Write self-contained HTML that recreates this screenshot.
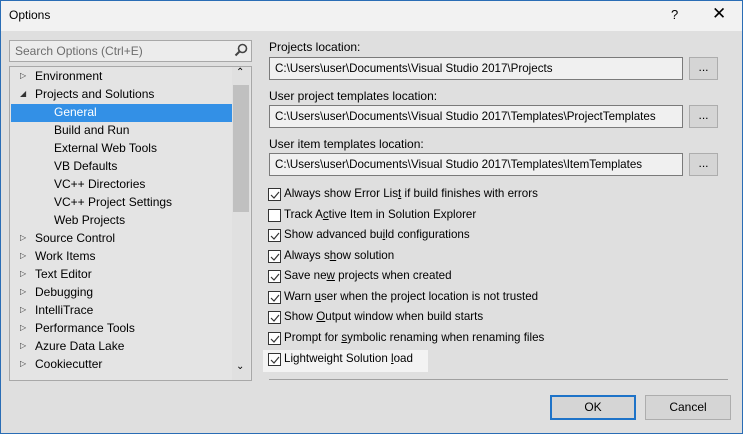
<!DOCTYPE html><html><head><style>
body{margin:0;width:743px;height:434px;overflow:hidden;font-family:"Segoe UI","Liberation Sans",sans-serif;font-size:12px;color:#000}
.win{position:absolute;left:0;top:0;width:741px;height:432px;border:1px solid #2a6db5;background:#dfdfdf}
.title{position:absolute;left:0;top:0;width:741px;height:30px;background:#f2f2f2}
.a{position:absolute;white-space:nowrap}
.box{position:absolute;background:#ececec;border:1px solid #a8a8a8;box-sizing:border-box}
.tb{position:absolute;background:#f0f0f0;border:1px solid #7a7a7a;box-sizing:border-box;height:23px;padding:3px 5px;line-height:15px;white-space:nowrap;overflow:hidden;font-size:11.6px}
.btn{position:absolute;background:#d5d5d5;border:1px solid #adadad;box-sizing:border-box;text-align:center}
.ti{position:absolute;left:34px;line-height:18px;white-space:nowrap}
.ar{position:absolute;left:19px;font-size:8px;line-height:18px;color:#333}
.cb{position:absolute;left:268px;width:13px;height:13px;border:1px solid #333;box-sizing:border-box;background:#fff}
.cl{position:absolute;left:284px;line-height:20px;white-space:nowrap;font-size:11.6px}
</style></head><body><div class="win">
<div class="title"></div>
<div class="a" style="left:8px;top:7px;font-size:12px">Options</div>
<div class="a" style="left:670px;top:6px;font-size:13px">?</div>
<div class="a" style="left:711px;top:3px;font-size:17px">✕</div>
<div class="box" style="left:8px;top:39px;width:243px;height:22px;background:#ececec"></div>
<div class="a" style="left:14px;top:43px;color:#6d6d6d">Search Options (Ctrl+E)</div>
<svg class="a" style="left:233px;top:42px" width="14" height="14"><circle cx="8.5" cy="5.5" r="4" fill="none" stroke="#444" stroke-width="1.6"/><line x1="5.5" y1="8.5" x2="1.5" y2="12.5" stroke="#444" stroke-width="2"/></svg>
<div class="box" style="left:8px;top:65px;width:243px;height:315px;background:#e4e4e4"></div>
<div class="a" style="left:231px;top:66px;width:18px;height:313px;background:#e0e0e0"></div>
<div class="a" style="left:232px;top:84px;width:16px;height:127px;background:#c0c0c0"></div>
<div class="a" style="left:235px;top:66px;font-size:10px">⌃</div>
<div class="a" style="left:235px;top:360px;font-size:10px">⌄</div>
<div class="a" style="left:10px;top:103px;width:221px;height:18px;background:#3390e6"></div>
<div class="ar" style="top:66px">▷</div><div class="ti" style="top:66px">Environment</div>
<div class="ar" style="top:84px">◢</div><div class="ti" style="top:84px">Projects and Solutions</div>
<div class="ti" style="top:102px;left:53px;color:#fff">General</div>
<div class="ti" style="top:120px;left:53px">Build and Run</div>
<div class="ti" style="top:138px;left:53px">External Web Tools</div>
<div class="ti" style="top:156px;left:53px">VB Defaults</div>
<div class="ti" style="top:174px;left:53px">VC++ Directories</div>
<div class="ti" style="top:192px;left:53px">VC++ Project Settings</div>
<div class="ti" style="top:210px;left:53px">Web Projects</div>
<div class="ar" style="top:228px">▷</div><div class="ti" style="top:228px">Source Control</div>
<div class="ar" style="top:246px">▷</div><div class="ti" style="top:246px">Work Items</div>
<div class="ar" style="top:264px">▷</div><div class="ti" style="top:264px">Text Editor</div>
<div class="ar" style="top:282px">▷</div><div class="ti" style="top:282px">Debugging</div>
<div class="ar" style="top:300px">▷</div><div class="ti" style="top:300px">IntelliTrace</div>
<div class="ar" style="top:318px">▷</div><div class="ti" style="top:318px">Performance Tools</div>
<div class="ar" style="top:336px">▷</div><div class="ti" style="top:336px">Azure Data Lake</div>
<div class="ar" style="top:354px">▷</div><div class="ti" style="top:354px">Cookiecutter</div>
<div class="a" style="left:268px;top:39px">Projects location:</div>
<div class="tb" style="left:268px;top:56px;width:414px">C:\Users\user\Documents\Visual Studio 2017\Projects</div>
<div class="btn" style="left:688px;top:56px;width:29px;height:23px;line-height:18px">...</div>
<div class="a" style="left:268px;top:88px">User project templates location:</div>
<div class="tb" style="left:268px;top:104px;width:414px">C:\Users\user\Documents\Visual Studio 2017\Templates\ProjectTemplates</div>
<div class="btn" style="left:688px;top:104px;width:29px;height:23px;line-height:18px">...</div>
<div class="a" style="left:268px;top:136px">User item templates location:</div>
<div class="tb" style="left:268px;top:152px;width:414px">C:\Users\user\Documents\Visual Studio 2017\Templates\ItemTemplates</div>
<div class="btn" style="left:688px;top:152px;width:29px;height:23px;line-height:18px">...</div>
<div class="a" style="left:262px;top:349px;width:165px;height:22px;background:#f3f3f3"></div>
<div class="a" style="left:268px;top:378px;width:459px;height:1px;background:#a0a0a0"></div>
<div class="btn" style="left:549px;top:394px;width:86px;height:25px;line-height:21px;border:2px solid #1e73c8">OK</div>
<div class="btn" style="left:644px;top:394px;width:86px;height:25px;line-height:23px">Cancel</div>
</div>
<div style="position:absolute;left:0;top:0;width:743px;height:434px">
<div class="cb" style="top:188px"></div><div class="cl" style="top:184px">Always show Error Lis<u>t</u> if build finishes with errors</div>
<div class="cb" style="top:209px;background:#fff"></div><div class="cl" style="top:205px">Track A<u>c</u>tive Item in Solution Explorer</div>
<div class="cb" style="top:229px"></div><div class="cl" style="top:225px">Show advanced bu<u>i</u>ld configurations</div>
<div class="cb" style="top:250px"></div><div class="cl" style="top:246px">Always s<u>h</u>ow solution</div>
<div class="cb" style="top:270px"></div><div class="cl" style="top:266px">Save ne<u>w</u> projects when created</div>
<div class="cb" style="top:291px"></div><div class="cl" style="top:287px">Warn <u>u</u>ser when the project location is not trusted</div>
<div class="cb" style="top:311px"></div><div class="cl" style="top:307px">Show <u>O</u>utput window when build starts</div>
<div class="cb" style="top:332px"></div><div class="cl" style="top:328px">Prompt for <u>s</u>ymbolic renaming when renaming files</div>
<div class="cb" style="top:353px"></div><div class="cl" style="top:349px">Lightweight Solution <u>l</u>oad</div>
<svg style="position:absolute;left:268px;top:0" width="14" height="380"><g fill="none" stroke="#333" stroke-width="1.2">
<path d="M3 195l3 3 5-6"/><path d="M3 236l3 3 5-6"/><path d="M3 257l3 3 5-6"/><path d="M3 277l3 3 5-6"/><path d="M3 298l3 3 5-6"/><path d="M3 318l3 3 5-6"/><path d="M3 339l3 3 5-6"/><path d="M3 360l3 3 5-6"/></g></svg>
</div>
</body></html>
